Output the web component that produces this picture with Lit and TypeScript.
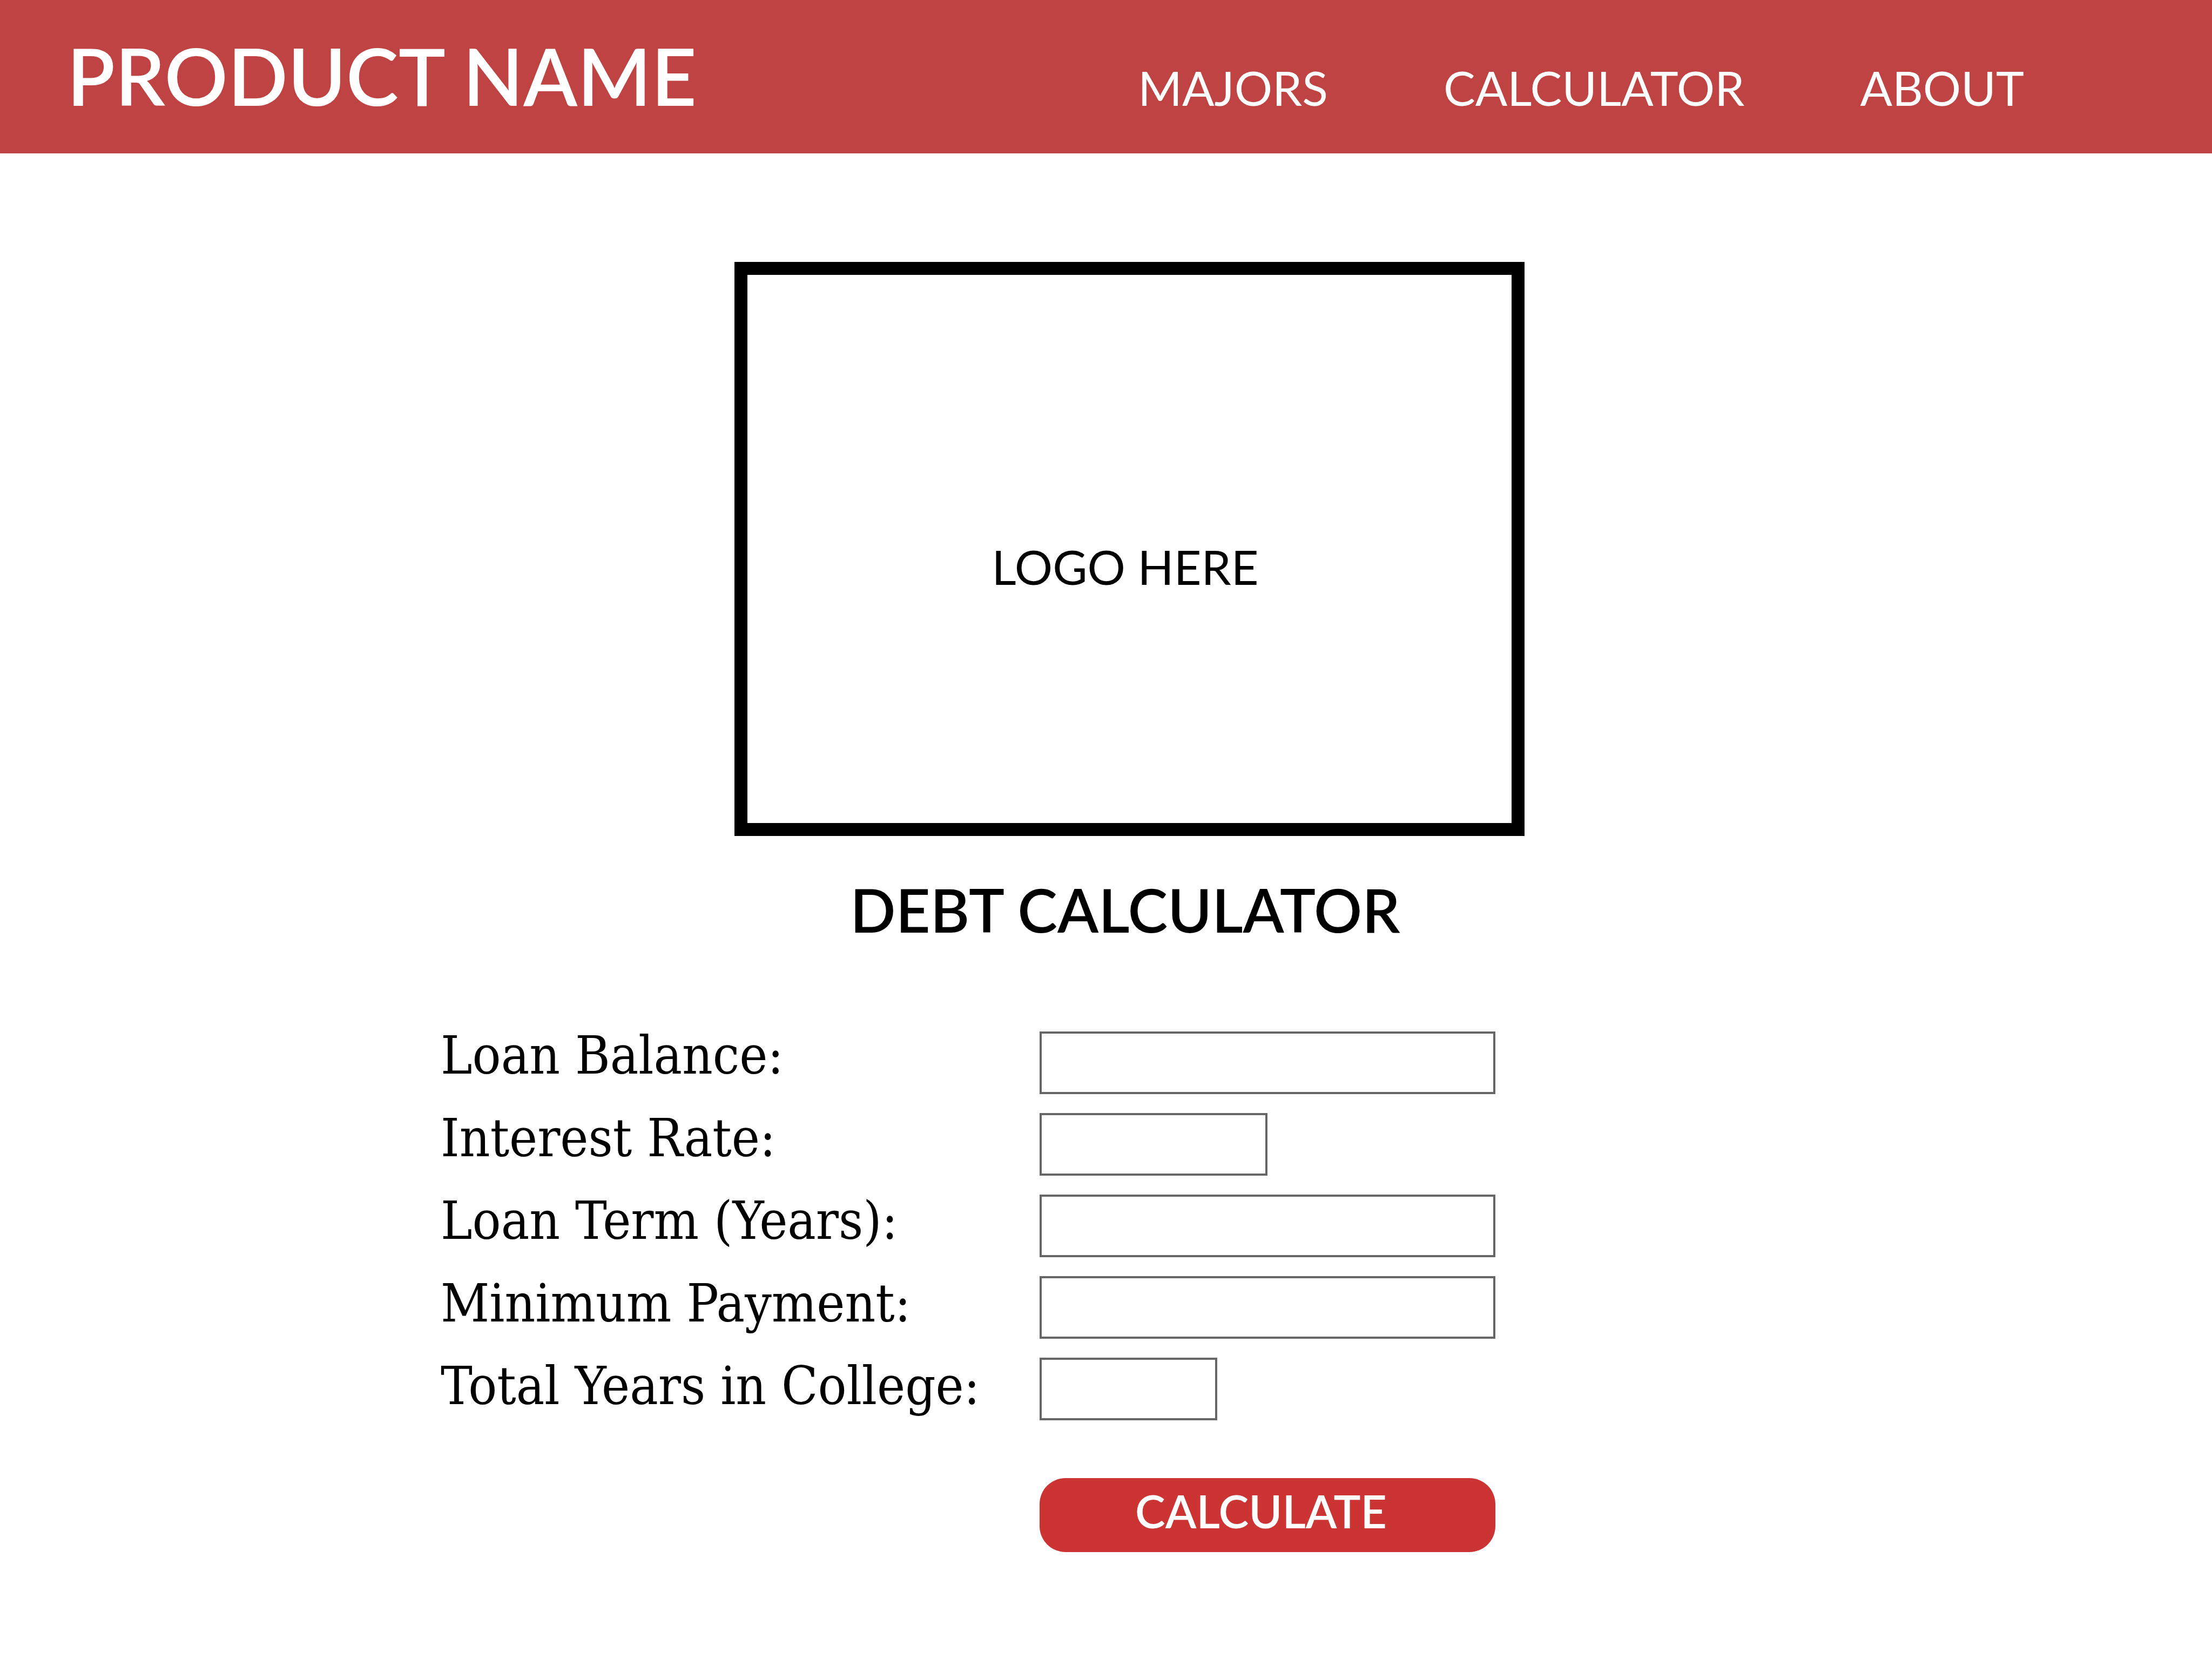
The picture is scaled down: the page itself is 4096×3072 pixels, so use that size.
import { LitElement, html, css } from "lit";
import { customElement } from "lit/decorators.js";

interface Field {
  id: string;
  label: string;
  size: "full" | "half" | "short";
}

const LINKS = ["MAJORS", "CALCULATOR", "ABOUT"];

const FIELDS: Field[] = [
  { id: "balance", label: "Loan Balance:", size: "full" },
  { id: "rate", label: "Interest Rate:", size: "half" },
  { id: "term", label: "Loan Term (Years):", size: "full" },
  { id: "payment", label: "Minimum Payment:", size: "full" },
  { id: "college", label: "Total Years in College:", size: "short" },
];

@customElement("app-root")
export class AppRoot extends LitElement {
  static styles = css`
    :host {
      display: block;
      min-height: 100vh;
      background: #ffffff;
      color: #000000;
      font-family: Lato, "Liberation Sans", sans-serif;
    }
    * {
      box-sizing: border-box;
    }
    .bar {
      display: flex;
      align-items: baseline;
      justify-content: space-between;
      min-height: 284px;
      padding: 52px 348px 0 124px;
      background: #bf4342;
      color: #ffffff;
    }
    .brand {
      margin: 0;
      font-size: 146px;
      font-weight: 600;
      line-height: 176px;
    }
    .links {
      display: flex;
      gap: 214px;
    }
    .link {
      color: inherit;
      font-size: 88px;
      line-height: 104px;
      text-decoration: none;
    }
    .hero {
      display: grid;
      grid-template-columns: 1360fr 1463fr 1273fr;
      row-gap: 70px;
      padding-top: 201px;
    }
    .logo {
      grid-column: 2;
      display: flex;
      align-items: center;
      justify-content: center;
      min-height: 1063px;
      padding: 64px 16px 0 0;
      border: 24px solid #000000;
      font-size: 88px;
      line-height: 104px;
    }
    .title {
      grid-column: 1 / -1;
      display: grid;
      grid-template-columns: subgrid;
      margin: 0;
      font-size: 111px;
      font-weight: 600;
      line-height: 132px;
      text-align: center;
    }
    .title-text {
      grid-column: 2;
      padding-right: 16px;
      white-space: nowrap;
    }
    .form {
      display: grid;
      grid-template-columns: 816fr 1109fr 844fr 1327fr;
      padding: 128px 0;
    }
    .labels {
      grid-column: 2;
      display: flex;
      flex-direction: column;
      align-items: flex-start;
      font-family: "DejaVu Serif Condensed", "DejaVu Serif", serif;
      font-size: 98px;
      line-height: 153px;
      white-space: nowrap;
    }
    .inputs {
      grid-column: 3;
      display: flex;
      flex-direction: column;
      gap: 35px;
      padding-top: 32px;
    }
    .input {
      height: 116px;
      margin: 0;
      padding: 0 24px;
      border: 4px solid #666666;
      border-radius: 0;
      background: #ffffff;
      font: inherit;
      font-size: 72px;
    }
    .full {
      width: 100%;
    }
    .half {
      width: 50%;
    }
    .short {
      width: 39%;
    }
    .submit {
      height: 137px;
      margin: 72px 0 0;
      padding: 0 24px 16px 0;
      border: 0;
      border-radius: 48px;
      background: #cc3333;
      color: #ffffff;
      font: inherit;
      font-size: 84px;
      font-weight: 600;
    }
  `;

  render() {
    return html`
      <header class="bar">
        <h1 class="brand">PRODUCT NAME</h1>
        <nav class="links">
          ${LINKS.map((name) => html`<a class="link" href="#${name.toLowerCase()}">${name}</a>`)}
        </nav>
      </header>
      <main>
        <section class="hero">
          <div class="logo">LOGO HERE</div>
          <h2 class="title"><span class="title-text">DEBT CALCULATOR</span></h2>
        </section>
        <form class="form" @submit=${(e: Event) => e.preventDefault()}>
          <div class="labels">
            ${FIELDS.map((f) => html`<label for=${f.id}>${f.label}</label>`)}
          </div>
          <div class="inputs">
            ${FIELDS.map((f) => html`<input class="input ${f.size}" id=${f.id} type="text" inputmode="decimal" />`)}
            <button class="submit" type="submit">CALCULATE</button>
          </div>
        </form>
      </main>
    `;
  }
}
